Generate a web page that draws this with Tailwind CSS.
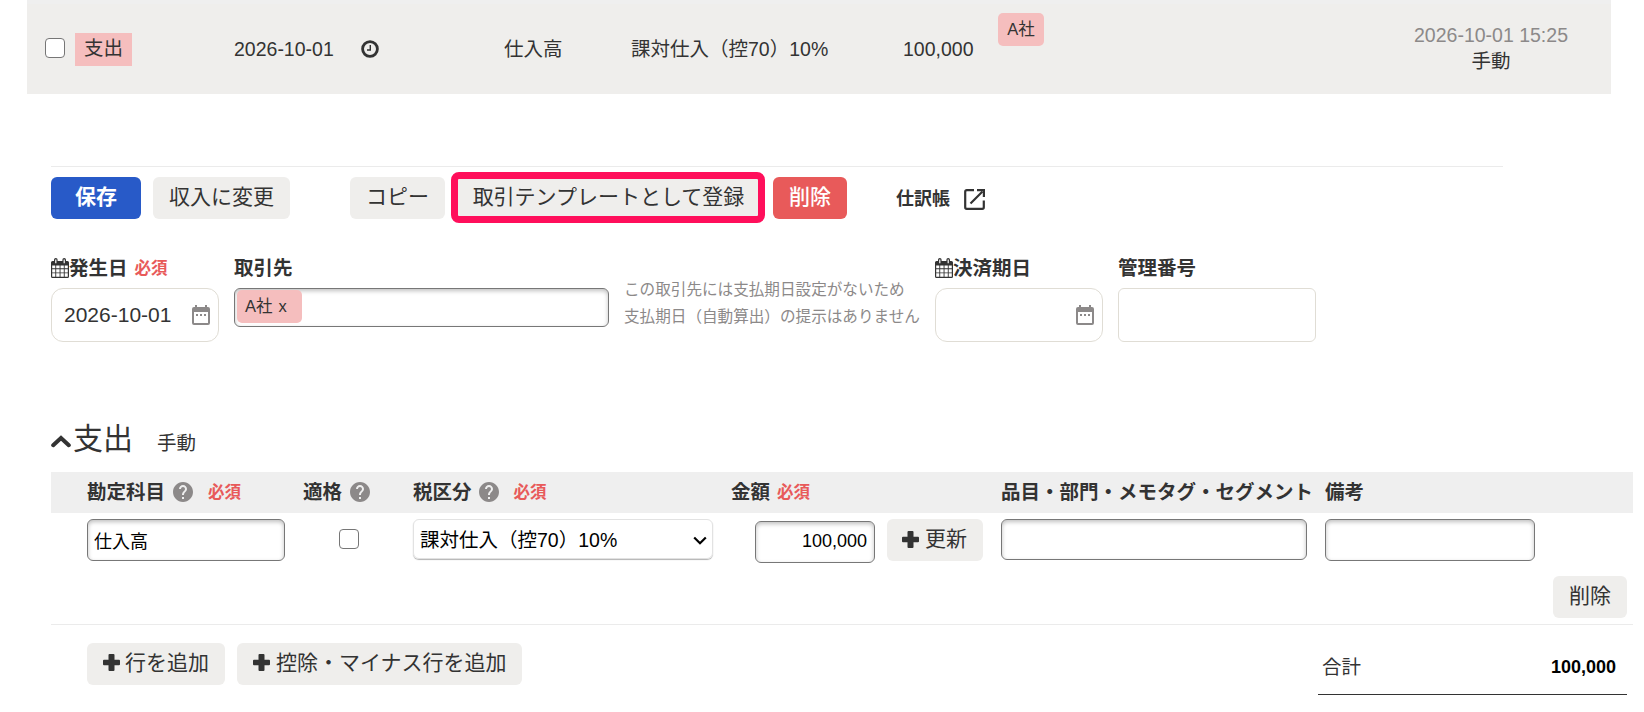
<!DOCTYPE html>
<html lang="ja">
<head>
  <meta charset="UTF-8"/>
  <meta name="viewport" content="width=device-width, initial-scale=1.0"/>
  <title>取引の編集</title>
  <script src="https://cdn.jsdelivr.net/npm/@tailwindcss/browser@4"></script>
</head>
<body class="bg-white h-[712px] overflow-hidden text-[#333] text-[19.5px] leading-[26px] font-['Liberation_Sans','Noto_Sans_CJK_JP',sans-serif]">

  <!-- shared icons -->
  <svg class="hidden">
    <symbol id="calendar" viewBox="0 0 18 20">
      <path fill="#333" fill-rule="evenodd" d="M1.5 3H3V1.8a1.8 1.8 0 0 1 3.600 0V3h4.800V1.800a1.800 1.800 0 0 1 3.600 0V3h1.500A1.500 1.500 0 0 1 18 4.500v14A1.500 1.500 0 0 1 16.500 20h-15A1.500 1.500 0 0 1 0 18.500v-14A1.500 1.500 0 0 1 1.500 3zM4.200 1.500V5.200h1.200V1.500zM12.600 1.500V5.200h1.200V1.500zM1.200 7.500v2.800h3.100V7.500zm4 0v2.800h3.400V7.500zm4.300 0v2.800h3.300V7.500zm4.200 0v2.800h3.100V7.500zM1.200 11.200v3.200h3.100v-3.200zm4 0v3.200h3.400v-3.200zm4.300 0v3.200h3.300v-3.200zm4.200 0v3.200h3.100v-3.200zM1.200 15.300v3.500h3.100v-3.500zm4 0v3.500h3.400v-3.500zm4.300 0v3.500h3.300v-3.500zm4.200 0v3.500h3.100v-3.500z"/>
    </symbol>
    <symbol id="date" viewBox="0 0 18 20">
      <path fill="#8c8989" fill-rule="evenodd" d="M3 0h2v2h8V0h2v2h1a2 2 0 0 1 2 2v14a2 2 0 0 1-2 2H2a2 2 0 0 1-2-2V4a2 2 0 0 1 2-2h1zM2 7v11h14V7zM4 9h2v2H4zm4 0h2v2H8zm4 0h2v2h-2z"/>
    </symbol>
    <symbol id="help" viewBox="2 2 20 20">
      <path fill="#8c8989" d="M12 2C6.480 2 2 6.480 2 12s4.480 10 10 10 10-4.480 10-10S17.520 2 12 2zm1 17h-2v-2h2v2zm2.070-7.750-.9.920C13.450 12.900 13 13.500 13 15h-2v-.5c0-1.100.450-2.100 1.170-2.830l1.240-1.260c.370-.360.590-.860.590-1.410 0-1.100-.900-2-2-2s-2 .900-2 2H8c0-2.210 1.790-4 4-4s4 1.790 4 4c0 .880-.360 1.680-.930 2.250z"/>
    </symbol>
    <symbol id="plus" viewBox="0 0 17 17">
      <path fill="#333" d="M6.500 0h4a1 1 0 0 1 1 1v4.700H16a1 1 0 0 1 1 1v3.600a1 1 0 0 1-1 1h-4.500V16a1 1 0 0 1-1 1h-4a1 1 0 0 1-1-1v-4.700H1a1 1 0 0 1-1-1V6.700a1 1 0 0 1 1-1h4.500V1a1 1 0 0 1 1-1z"/>
    </symbol>
  </svg>

  <!-- transaction row -->
  <div class="ml-[27px] w-[1584px] h-[94px] bg-[#efeeec] border-t-4 border-[#efefef] flex">
    <input type="checkbox" class="appearance-none ml-[18px] mt-[34px] size-5 shrink-0 bg-white border-[1.5px] border-[#767676] rounded-[4px]"/>
    <span class="ml-[10px] mt-[29px] w-[57px] h-[33px] bg-[#f5bebe] text-center leading-[31px]">支出</span>
    <span class="ml-[102px] mt-[32px] w-[127px]">2026-10-01</span>
    <svg class="mt-[36px] size-[18px] shrink-0" viewBox="0 0 18 18" fill="none" stroke="#333">
      <circle cx="9" cy="9" r="7.400" stroke-width="2.800"/>
      <path d="M9.300 5v5H6" stroke-width="1.400"/>
    </svg>
    <span class="ml-[125px] mt-[32px] w-[127px]">仕入高</span>
    <span class="mt-[32px] w-[272px] whitespace-nowrap">課対仕入（控70）10%</span>
    <span class="mt-[32px] w-[95px]">100,000</span>
    <span class="mt-[9px] w-[46px] h-[33px] bg-[#f5bebe] rounded-[5px] text-[16.5px] text-center leading-[32px]">A社</span>
    <div class="ml-[369px] mt-[18px] w-[156px] text-center leading-[26px]">
      <p class="text-[#8c8989] whitespace-nowrap">2026-10-01 15:25</p>
      <p>手動</p>
    </div>
  </div>

  <!-- edit form -->
  <div class="mt-[72px] ml-[51px] w-[1452px] border-t border-[#ebebeb]">
    <div class="pt-[5px] h-[58px] flex text-[21px] leading-[40px] text-center whitespace-nowrap">
      <button class="mt-[5px] w-[90px] h-[42px] bg-[#285ac8] text-white font-bold rounded-[6px] pb-0.5">保存</button>
      <button class="ml-3 mt-[5px] w-[137px] h-[42px] bg-[#efeeec] rounded-[6px] pb-0.5">収入に変更</button>
      <button class="ml-[60px] mt-[5px] w-[95px] h-[42px] bg-[#efeeec] rounded-[6px] pb-0.5">コピー</button>
      <button class="ml-[6px] w-[314px] h-[51px] bg-[#efeeec] border-[7px] border-[#ff0f5b] rounded-[8px] pl-px pb-0.5 leading-[36px]">取引テンプレートとして登録</button>
      <button class="ml-2 mt-[5px] w-[74px] h-[42px] bg-[#e85a5a] text-white font-medium rounded-[6px] pb-0.5">削除</button>
      <a class="ml-[49px] mt-[7px] text-[18px] font-bold">仕訳帳</a>
      <svg class="ml-[14px] mt-[17px] size-[21px]" viewBox="0 0 21 21">
        <path d="M10 1.200H2.700A1.500 1.500 0 0 0 1.200 2.700v15.600a1.500 1.500 0 0 0 1.500 1.500h15.600a1.500 1.500 0 0 0 1.500-1.500V11.500M18.500 2.500 6.500 14.500" fill="none" stroke="#333" stroke-width="2.200"/>
        <path d="M13 0h8v8h-2.200V2.200H13z" fill="#333"/>
      </svg>
    </div>

    <div class="mt-[30px] flex">
      <div class="w-[183px]">
        <div class="flex h-[33px] items-start">
          <svg class="mt-[3px] w-[18px] h-5 shrink-0"><use href="#calendar"/></svg>
          <b>発生日</b>
          <span class="ml-[7px] text-[16.5px] font-bold text-[#e85a5a]">必須</span>
        </div>
        <div class="w-[168px] h-[54px] border border-[#e0ddd5] rounded-[12px] flex items-center justify-between pl-3 pr-2 text-[21px]">
          2026-10-01
          <svg class="w-[18px] h-5"><use href="#date"/></svg>
        </div>
      </div>
      <div class="w-[390px]">
        <div class="h-[33px]"><b>取引先</b></div>
        <div class="w-[375px] h-[39px] border border-[#777] rounded-[6px] shadow-[inset_0_2px_4px_rgba(0,0,0,0.25)] pl-0.5 pt-px">
          <div class="w-[65px] h-[33px] bg-[#f5bebe] rounded-[5px] pl-2 text-[16.5px] leading-[32px] [word-spacing:1.5px]">A社 x</div>
        </div>
      </div>
      <p class="w-[311px] pt-[21px] text-[15.6px] leading-[27px] text-[#8c8989] whitespace-nowrap">この取引先には支払期日設定がないため<br/>支払期日（自動算出）の提示はありません</p>
      <div class="w-[183px]">
        <div class="flex h-[33px] items-start">
          <svg class="mt-[3px] w-[18px] h-5 shrink-0"><use href="#calendar"/></svg>
          <b>決済期日</b>
        </div>
        <div class="w-[168px] h-[54px] border border-[#e0ddd5] rounded-[12px] flex items-center justify-end pr-2">
          <svg class="w-[18px] h-5"><use href="#date"/></svg>
        </div>
      </div>
      <div>
        <div class="h-[33px]"><b>管理番号</b></div>
        <input class="block w-[198px] h-[54px] border border-[#e0ddd5] rounded-[6px]"/>
      </div>
    </div>
  </div>

  <!-- detail lines -->
  <div class="ml-[51px] w-[1582px]">
    <div class="mt-[76px] h-[54px] flex">
      <svg class="mt-[16px] w-5 h-[14px]" viewBox="0 0 20 14"><path d="M2.200 11.200 10 4l7.800 7.200" fill="none" stroke="#333" stroke-width="4" stroke-linecap="round"/></svg>
      <h2 class="ml-[2px] text-[30px] leading-[42px]">支出</h2>
      <span class="ml-6 mt-[12px]">手動</span>
    </div>

    <div class="h-[41px] pl-9 bg-[#efefef] grid grid-cols-[216px_110px_318px_270px_324px_1fr] leading-[40px] whitespace-nowrap">
      <div class="flex"><b>勘定科目</b>
        <svg class="ml-2 mt-[10px] size-5"><use href="#help"/></svg>
        <span class="ml-[15px] text-[16.5px] font-bold text-[#e85a5a]">必須</span></div>
      <div class="flex"><b>適格</b>
        <svg class="ml-2 mt-[10px] size-5"><use href="#help"/></svg></div>
      <div class="flex"><b>税区分</b>
        <svg class="ml-[7px] mt-[10px] size-5"><use href="#help"/></svg>
        <span class="ml-[15px] text-[16.5px] font-bold text-[#e85a5a]">必須</span></div>
      <div class="flex"><b>金額</b>
        <span class="ml-[7px] text-[16.5px] font-bold text-[#e85a5a]">必須</span></div>
      <b>品目・部門・メモタグ・セグメント</b>
      <b>備考</b>
    </div>

    <div class="h-[63px] pl-9 pt-[6px] grid grid-cols-[216px_110px_318px_270px_324px_1fr] items-start">
      <input value="仕入高" class="w-[198px] h-[42px] border border-[#777] rounded-[6px] shadow-[inset_0_2px_4px_rgba(0,0,0,0.25)] pl-[6px] text-[18px] text-black"/>
      <input type="checkbox" class="appearance-none ml-9 mt-[10px] size-5 bg-white border-[1.5px] border-[#767676] rounded-[4px]"/>
      <div class="w-[300px] h-10 border border-[#e2e2e2] rounded-[6px] shadow-[0_1px_1px_rgba(0,0,0,0.3)] flex items-center justify-between pl-[6px] pr-[5px] pt-0.5 text-black">
        課対仕入（控70）10%
        <svg class="w-[14px] h-[9px]" viewBox="0 0 14 9"><path d="M1.200 1.500 7 7.200l5.800-5.700" fill="none" stroke="#000" stroke-width="2.200"/></svg>
      </div>
      <div class="pl-6 flex">
        <input value="100,000" class="mt-0.5 w-[120px] h-[42px] border border-[#777] rounded-[6px] shadow-[inset_0_2px_4px_rgba(0,0,0,0.25)] pr-[7px] pb-0.5 text-[18px] text-black text-right"/>
        <button class="ml-3 w-24 h-[42px] bg-[#efeeec] rounded-[6px] flex pl-[15px] text-[21px] leading-[40px]">
          <svg class="mt-[12px] mr-[6px] size-[17px]"><use href="#plus"/></svg>更新</button>
      </div>
      <input class="w-[306px] h-[41px] border border-[#777] rounded-[6px] shadow-[inset_0_2px_4px_rgba(0,0,0,0.25)]"/>
      <input class="w-[210px] h-[42px] border border-[#777] rounded-[6px] shadow-[inset_0_2px_4px_rgba(0,0,0,0.25)]"/>
    </div>
    <div class="h-[49px] pr-[6px] border-b border-[#ebebeb] flex justify-end">
      <button class="w-[74px] h-[42px] bg-[#efeeec] rounded-[6px] text-[21px] leading-[40px] pb-0.5">削除</button>
    </div>

    <div class="pl-9 pr-[6px] flex text-[21px] leading-[40px]">
      <button class="mt-[18px] w-[138px] h-[42px] bg-[#efeeec] rounded-[6px] flex pl-4">
        <svg class="mt-[11px] mr-[5px] size-[17px]"><use href="#plus"/></svg>行を追加</button>
      <button class="ml-3 mt-[18px] w-[285px] h-[42px] bg-[#efeeec] rounded-[6px] flex pl-4">
        <svg class="mt-[11px] mr-[6px] size-[17px]"><use href="#plus"/></svg>控除・マイナス行を追加</button>
      <div class="ml-auto w-[309px] h-[70px] border-b border-[#333] flex justify-between pl-1 pr-[11px] pt-[22px] text-[19.5px]">
        <span>合計</span>
        <b class="text-[18px] text-black">100,000</b>
      </div>
    </div>
  </div>
</body>
</html>
